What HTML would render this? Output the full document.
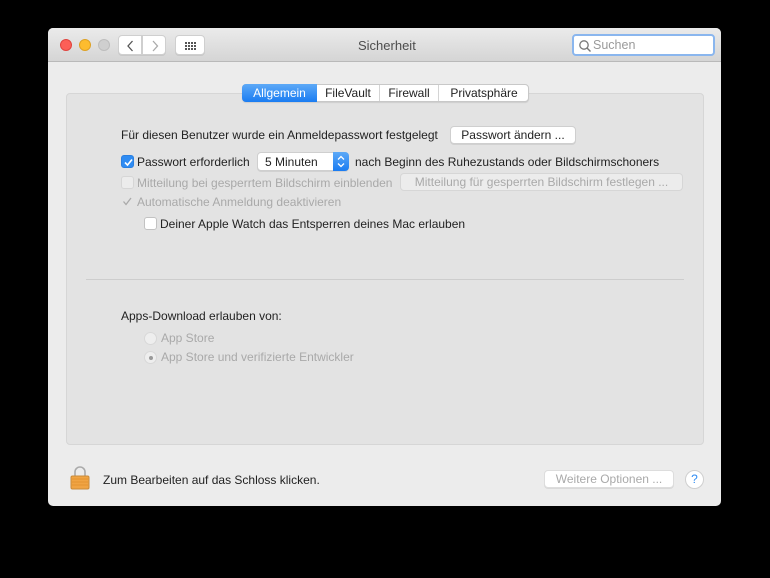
<!DOCTYPE html>
<html><head><meta charset="utf-8"><style>
*{margin:0;padding:0;box-sizing:border-box}
body{width:770px;height:578px;background:#000;font-family:"Liberation Sans",sans-serif;font-size:12px;color:#222;position:relative;overflow:hidden}
.a{position:absolute;white-space:nowrap}
#win{position:absolute;left:48px;top:28px;width:673px;height:478px;background:#ececec;border-radius:5px;overflow:hidden}
#tb{position:absolute;left:0;top:0;width:673px;height:34px;background:linear-gradient(#ebebeb,#d5d5d5);border-bottom:1px solid #b9b9b9}
.dot{position:absolute;top:11px;width:12px;height:12px;border-radius:50%}
.btn{position:absolute;background:#fff;border:1px solid #cfcfcf;border-radius:4px;box-shadow:0 1px 0 rgba(0,0,0,.08)}
.dis{color:#a9a9a9}
.cb{position:absolute;width:13px;height:13px;border-radius:3px;background:#fff;border:1px solid #c2c2c2}
</style></head><body>
<div id="win">
 <div id="tb">
  <div class="dot" style="left:12px;background:#fc5f57;border:1px solid #e0443e"></div>
  <div class="dot" style="left:31px;background:#fdbc2e;border:1px solid #dea123"></div>
  <div class="dot" style="left:50px;background:#cfcfcf;border:1px solid #bdbdbd"></div>
  <div class="btn" style="left:70px;top:7px;width:24px;height:20px;border-radius:4px 0 0 4px"><svg width="24" height="20"><path d="M13.5 5 L9 10 L13.5 15" stroke="#555" stroke-width="1.3" fill="none"/></svg></div>
  <div class="btn" style="left:94px;top:7px;width:24px;height:20px;border-radius:0 4px 4px 0"><svg width="24" height="20"><path d="M10 5 L14.5 10 L10 15" stroke="#aaa" stroke-width="1.3" fill="none"/></svg></div>
  <div class="btn" style="left:127px;top:7px;width:30px;height:20px"><svg width="30" height="20"><g fill="#555"><rect x="9" y="6" width="2" height="2"/><rect x="12" y="6" width="2" height="2"/><rect x="15" y="6" width="2" height="2"/><rect x="18" y="6" width="2" height="2"/><rect x="9" y="9" width="2" height="2"/><rect x="12" y="9" width="2" height="2"/><rect x="15" y="9" width="2" height="2"/><rect x="18" y="9" width="2" height="2"/><rect x="9" y="12" width="2" height="2"/><rect x="12" y="12" width="2" height="2"/><rect x="15" y="12" width="2" height="2"/><rect x="18" y="12" width="2" height="2"/></g></svg></div>
  <div class="a" style="left:310px;top:10px;font-size:13px;color:#4d4d4d">Sicherheit</div>
  <div class="a" style="left:524px;top:6px;width:143px;height:22px;background:#fff;border:2px solid #8ab6ee;border-radius:4px"><svg class="a" style="left:4px;top:3px" width="14" height="14"><circle cx="6" cy="6" r="4.2" stroke="#777" stroke-width="1.3" fill="none"/><path d="M9 9 L12.5 12.5" stroke="#777" stroke-width="1.4"/></svg><span class="a" style="left:19px;top:2px;color:#9a9a9a;font-size:12.5px">Suchen</span></div>
 </div>
 <div class="a" style="left:18px;top:65px;width:638px;height:352px;background:#e3e3e3;border:1px solid #d6d6d6;border-radius:4px"></div>
 <div class="a" style="left:194px;top:56px;width:287px;height:18px;background:#fff;border:1px solid #c8c8c8;border-radius:4px;box-shadow:0 1px 1px rgba(0,0,0,.1)"></div>
 <div class="a" style="left:194px;top:56px;width:75px;height:18px;background:linear-gradient(#5da9f7,#1a7cf2);border-radius:4px 0 0 4px;color:#fff;text-align:center;line-height:18px">Allgemein</div>
 <div class="a" style="left:269px;top:57px;width:63px;height:16px;line-height:16px;text-align:center;border-right:1px solid #d4d4d4">FileVault</div>
 <div class="a" style="left:332px;top:57px;width:59px;height:16px;line-height:16px;text-align:center;border-right:1px solid #d4d4d4">Firewall</div>
 <div class="a" style="left:391px;top:57px;width:90px;height:16px;line-height:16px;text-align:center">Privatsphäre</div>

 <div class="a" style="left:73px;top:100px">Für diesen Benutzer wurde ein Anmeldepasswort festgelegt</div>
 <div class="btn" style="left:402px;top:98px;width:126px;height:18px;line-height:16px;text-align:center">Passwort ändern ...</div>

 <div class="cb" style="left:73px;top:127px;background:#2f8cf3;border-color:#2a7fe0"><svg class="a" style="left:1px;top:1px" width="11" height="11"><path d="M2 5.5 L4.5 8 L9 2.5" stroke="#fff" stroke-width="1.6" fill="none"/></svg></div>
 <div class="a" style="left:89px;top:127px">Passwort erforderlich</div>
 <div class="btn" style="left:209px;top:124px;width:92px;height:19px"><span class="a" style="left:7px;top:2px">5 Minuten</span><div class="a" style="left:75px;top:-1px;width:16px;height:19px;background:linear-gradient(#5da9f7,#1a7cf2);border-radius:0 4px 4px 0"><svg width="16" height="19"><path d="M5 7.5 L8 4.5 L11 7.5 M5 11.5 L8 14.5 L11 11.5" stroke="#fff" stroke-width="1.3" fill="none"/></svg></div></div>
 <div class="a" style="left:307px;top:127px">nach Beginn des Ruhezustands oder Bildschirmschoners</div>

 <div class="cb" style="left:73px;top:148px;background:#ececec;border-color:#d6d6d6"></div>
 <div class="a dis" style="left:89px;top:148px">Mitteilung bei gesperrtem Bildschirm einblenden</div>
 <div class="a dis" style="left:352px;top:145px;width:283px;height:18px;line-height:17px;text-align:center;background:#ececec;border:1px solid #d6d6d6;border-radius:4px">Mitteilung für gesperrten Bildschirm festlegen ...</div>

 <svg class="a" style="left:73px;top:167px" width="13" height="13"><path d="M2.5 6.5 L5 9.5 L10 3" stroke="#aaa" stroke-width="1.3" fill="none"/></svg>
 <div class="a dis" style="left:89px;top:167px">Automatische Anmeldung deaktivieren</div>

 <div class="cb" style="left:96px;top:189px"></div>
 <div class="a" style="left:112px;top:189px">Deiner Apple Watch das Entsperren deines Mac erlauben</div>

 <div class="a" style="left:38px;top:251px;width:598px;height:1px;background:#cdcdcd"></div>

 <div class="a" style="left:73px;top:281px">Apps-Download erlauben von:</div>
 <div class="a" style="left:96px;top:304px;width:13px;height:13px;border-radius:50%;background:#eee;border:1px solid #d8d8d8"></div>
 <div class="a dis" style="left:113px;top:303px">App Store</div>
 <div class="a" style="left:96px;top:323px;width:13px;height:13px;border-radius:50%;background:#eee;border:1px solid #d8d8d8"><div class="a" style="left:4px;top:4px;width:4px;height:4px;border-radius:50%;background:#999"></div></div>
 <div class="a dis" style="left:113px;top:322px">App Store und verifizierte Entwickler</div>

 <svg class="a" style="left:21px;top:437px" width="22" height="25"><path d="M6 11 V7 A5 5 0 0 1 16 7 V11" stroke="#aaa" stroke-width="1.6" fill="none"/><rect x="2" y="11" width="18" height="13" rx="1.5" fill="#f0a443" stroke="#c98a3a"/><path d="M3 14H19M3 17H19M3 20H19" stroke="#e08f2e" stroke-width=".7"/></svg>
 <div class="a" style="left:55px;top:445px">Zum Bearbeiten auf das Schloss klicken.</div>
 <div class="btn dis" style="left:496px;top:442px;width:130px;height:18px;line-height:16px;text-align:center;border-color:#ddd">Weitere Optionen ...</div>
 <div class="a" style="left:637px;top:442px;width:19px;height:19px;border-radius:50%;background:#fff;border:1px solid #cfcfcf;color:#2f8cf3;text-align:center;line-height:17px;font-size:12px">?</div>
</div>
</body></html>
